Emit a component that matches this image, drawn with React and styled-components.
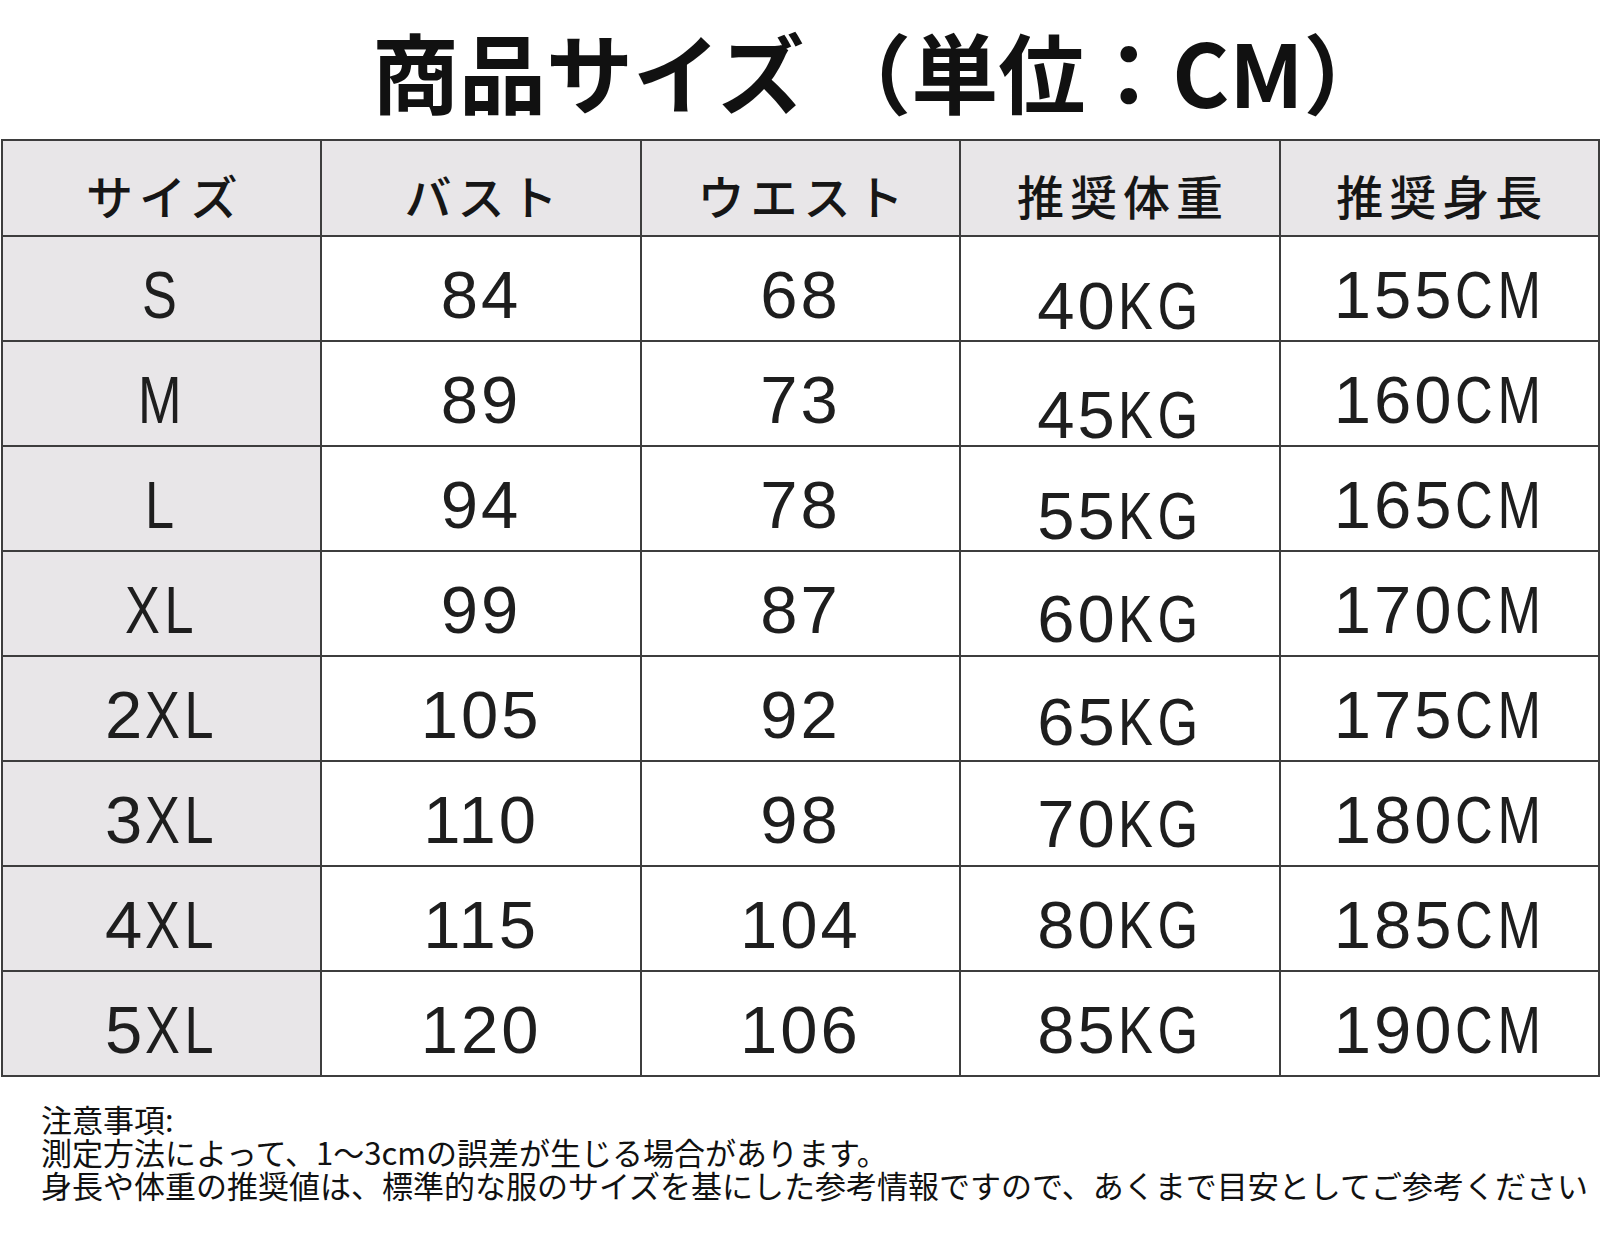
import React from 'react'
import styled, { createGlobalStyle } from 'styled-components'

const GlobalStyle = createGlobalStyle`
  html, body {
    margin: 0;
    padding: 0;
    background: #ffffff;
  }
  body {
    width: 1600px;
    height: 1233px;
    overflow: hidden;
    font-family: "Noto Sans CJK JP", "Noto Sans", sans-serif;
    color: #1c1c1c;
  }
`

const headers = ['サイズ', 'バスト', 'ウエスト', '推奨体重', '推奨身長']

// 数字と単位を分けておく（単位は細く詰めて組む）
const rows = [
  { size: ['', 'S'], bust: '84', waist: '68', weight: ['40', 'KG'], height: ['155', 'CM'], drop: 14 },
  { size: ['', 'M'], bust: '89', waist: '73', weight: ['45', 'KG'], height: ['160', 'CM'], drop: 18 },
  { size: ['', 'L'], bust: '94', waist: '78', weight: ['55', 'KG'], height: ['165', 'CM'], drop: 14 },
  { size: ['', 'XL'], bust: '99', waist: '87', weight: ['60', 'KG'], height: ['170', 'CM'], drop: 11 },
  { size: ['2', 'XL'], bust: '105', waist: '92', weight: ['65', 'KG'], height: ['175', 'CM'], drop: 8 },
  { size: ['3', 'XL'], bust: '110', waist: '98', weight: ['70', 'KG'], height: ['180', 'CM'], drop: 5 },
  { size: ['4', 'XL'], bust: '115', waist: '104', weight: ['80', 'KG'], height: ['185', 'CM'], drop: 0 },
  { size: ['5', 'XL'], bust: '120', waist: '106', weight: ['85', 'KG'], height: ['190', 'CM'], drop: 0 },
]

const FONT_PX = 67
const UNIT_SCALE = 0.78
const UNIT_SPACING = 6
// Liberation Sans advance widths (em)
const advance = { C: 0.722, M: 0.833, K: 0.667, G: 0.778, X: 0.667, L: 0.556, S: 0.667 }

const unitShrink = unit => {
  const w = unit.split('').reduce((sum, ch) => sum + advance[ch] * FONT_PX + UNIT_SPACING, 0)
  return Math.round(w * (1 - UNIT_SCALE))
}

const Page = styled.div`
  width: 1600px;
  height: 1233px;
  display: flex;
  flex-direction: column;
  overflow: hidden;
`

const Title = styled.h1`
  margin: 0;
  height: 139px;
  display: flex;
  align-items: center;
  justify-content: flex-start;
  padding: 2px 0 0 372px;
  box-sizing: border-box;
  font-family: "Noto Sans CJK JP", sans-serif;
  font-weight: 700;
  font-size: 87px;
  line-height: 1;
  color: #111;
  white-space: pre;
`

const Table = styled.div`
  display: grid;
  grid-template-columns: repeat(5, 1fr);
  grid-template-rows: 94px repeat(8, 103px);
  gap: 2px;
  margin-left: 1px;
  width: 1599px;
  box-sizing: border-box;
  border: 2px solid #3d3d3d;
  background: #3d3d3d;
`

const Cell = styled.div`
  background: ${p => (p.$shade ? '#e8e6e8' : '#ffffff')};
  display: flex;
  align-items: center;
  justify-content: center;
`

const HeadText = styled.span`
  font-family: "Noto Sans CJK JP", sans-serif;
  font-weight: 500;
  font-size: 47px;
  letter-spacing: 6px;
  margin-right: -6px;
  padding-top: 12px;
  line-height: 1;
  color: #161616;
`

const Value = styled.span`
  display: inline-flex;
  align-items: baseline;
  font-family: "Liberation Sans", Arial, sans-serif;
  font-size: ${FONT_PX}px;
  letter-spacing: 3px;
  line-height: 1;
  padding-top: ${p => 12 + Math.round((p.$drop || 0) * 1.6)}px;
  color: #1e1e1e;
  white-space: pre;
`

const Unit = styled.span`
  display: inline-block;
  letter-spacing: ${UNIT_SPACING}px;
  transform: scaleX(${UNIT_SCALE});
  transform-origin: left center;
`

const Notes = styled.div`
  padding: 25px 0 0 41px;
  font-family: "Noto Sans CJK JP", sans-serif;
  font-size: 31px;
  line-height: 33px;
  color: #111;
`

const NoteLine = styled.div`
  white-space: nowrap;
  letter-spacing: ${p => p.$spacing || 0}px;
`

const Amount = ({ parts, drop }) => (
  <Value $drop={drop}>
    {parts[0]}
    <Unit style={{ marginRight: -unitShrink(parts[1]) }}>{parts[1]}</Unit>
  </Value>
)

export default function App() {
  return (
    <Page>
      <GlobalStyle />
      <Title>商品サイズ （単位：CM）</Title>
      <Table>
        {headers.map(h => (
          <Cell key={h} $shade>
            <HeadText>{h}</HeadText>
          </Cell>
        ))}
        {rows.map(r => (
          <React.Fragment key={r.size.join('')}>
            <Cell $shade>
              <Amount parts={r.size} />
            </Cell>
            <Cell>
              <Value>{r.bust}</Value>
            </Cell>
            <Cell>
              <Value>{r.waist}</Value>
            </Cell>
            <Cell>
              <Amount parts={r.weight} drop={r.drop} />
            </Cell>
            <Cell>
              <Amount parts={r.height} />
            </Cell>
          </React.Fragment>
        ))}
      </Table>
      <Notes>
        <NoteLine>注意事項:</NoteLine>
        <NoteLine>測定方法によって、1〜3cmの誤差が生じる場合があります。</NoteLine>
        <NoteLine>身長や体重の推奨値は、標準的な服のサイズを基にした参考情報ですので、あくまで目安としてご参考ください</NoteLine>
      </Notes>
    </Page>
  )
}
